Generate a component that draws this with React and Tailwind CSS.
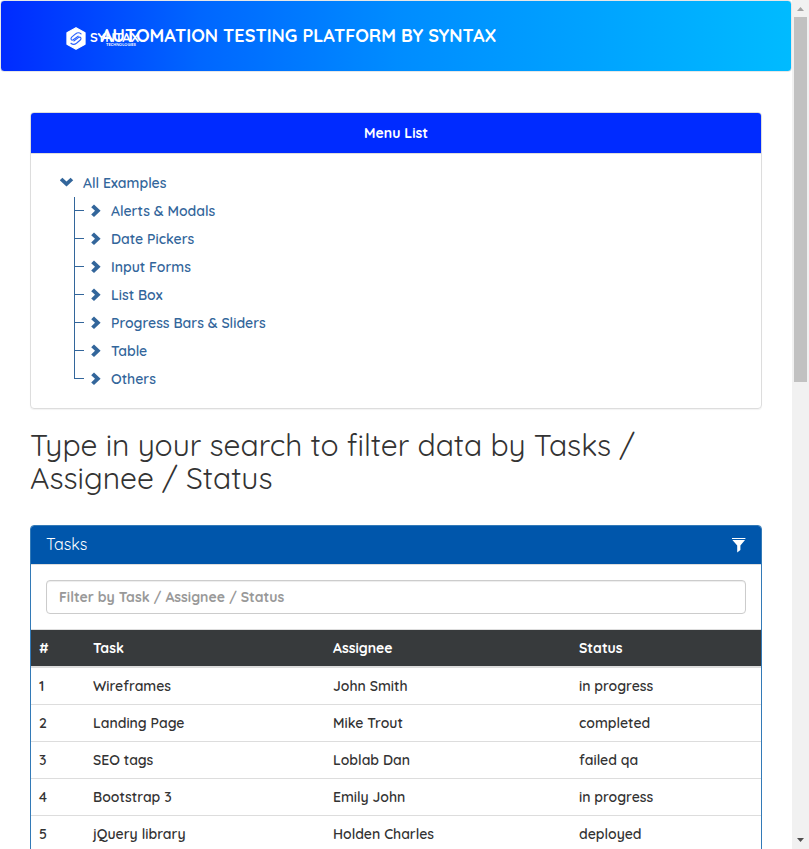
const MENU_ITEMS = [
  'Alerts & Modals',
  'Date Pickers',
  'Input Forms',
  'List Box',
  'Progress Bars & Sliders',
  'Table',
  'Others',
];

const TASKS = [
  { id: 1, task: 'Wireframes', assignee: 'John Smith', status: 'in progress' },
  { id: 2, task: 'Landing Page', assignee: 'Mike Trout', status: 'completed' },
  { id: 3, task: 'SEO tags', assignee: 'Loblab Dan', status: 'failed qa' },
  { id: 4, task: 'Bootstrap 3', assignee: 'Emily John', status: 'in progress' },
  { id: 5, task: 'jQuery library', assignee: 'Holden Charles', status: 'deployed' },
];

function ChevronDown() {
  return (
    <svg className="h-3.5 w-3.5 shrink-0" viewBox="0 0 14 14" fill="currentColor" aria-hidden="true">
      <path d="M-0.2 4.2 2.4 1.8 6.5 5.6 10.6 1.8 13.2 4.2 6.5 10.6Z" />
    </svg>
  );
}

function ChevronRight() {
  return (
    <svg className="h-3.5 w-3.5 shrink-0" viewBox="0 0 14 14" fill="currentColor" aria-hidden="true">
      <path d="M1.2 3.2 4 0.5 10.6 6.8 4 13.1 1.2 10.4 5 6.8Z" />
    </svg>
  );
}

function FilterIcon() {
  return (
    <svg className="h-4 w-3.5" viewBox="0 0 14 16" fill="currentColor" aria-hidden="true">
      <path d="M0 1H13.4V2H0Z" />
      <path d="M0.4 3H13L8.4 8.4V13L5.2 15.6V8.4Z" />
    </svg>
  );
}

function LogoMark() {
  return (
    <svg className="mt-1 h-[23px] w-5 shrink-0" viewBox="0 0 21 24" aria-hidden="true">
      <path
        d="M10.5 0.6 20 6V18L10.5 23.4 1 18V6Z"
        fill="#fff"
        stroke="#fff"
        strokeWidth="1.2"
        strokeLinejoin="round"
      />
      <g fill="none" stroke="#2b62ff" strokeWidth="1.2" strokeLinecap="round" strokeLinejoin="round">
        <path d="M15.8 7.2C14 5.6 11.8 5.8 10 7.2L6 10.6C4.4 12.4 5.6 14.2 7.6 13.4L12.8 9.6" />
        <path d="M5.2 17C7 18.6 9.2 18.4 11 17L15 13.6C16.6 11.8 15.4 10 13.4 10.8L8.2 14.6" />
      </g>
    </svg>
  );
}

function Navbar() {
  return (
    <nav className="mb-10 rounded border border-[#e7e7e7] bg-[linear-gradient(90deg,#002bff,#0066ff,#008cff,#00a3ff,#00bbff)] pl-[65px]">
      <a href="#home" className="relative flex h-[70px] items-center text-white">
        <LogoMark />
        <span className="absolute left-6 top-7 text-[13px] leading-4 font-bold">SYNTAX</span>
        <span className="absolute left-10 top-[41px] text-[4px] leading-[6px] font-bold">TECHNOLOGIES</span>
        <span className="ml-[15px] text-lg leading-5 font-bold">AUTOMATION TESTING PLATFORM BY SYNTAX</span>
      </a>
    </nav>
  );
}

function MenuPanel() {
  return (
    <section className="mb-5 rounded border border-[#ddd] shadow-[0_1px_1px_rgba(0,0,0,0.05)]">
      <h2 className="rounded-t-[3px] border-b border-[#ddd] bg-[#002bff] py-2.5 text-center leading-5 font-bold text-white">
        Menu List
      </h2>
      <div className="p-[15px] text-[#33669b]">
        <a href="#examples" className="ml-3.5 flex h-7 items-center gap-[9px]">
          <ChevronDown />
          All Examples
        </a>
        <ul className="ml-7">
          {MENU_ITEMS.map((item, i) => (
            <li key={item} className="flex h-7">
              <span className="flex w-2.5 flex-col">
                <span className="h-3.5 border-b border-l border-[#33669b]" />
                {i < MENU_ITEMS.length - 1 && <span className="flex-1 border-l border-[#33669b]" />}
              </span>
              <a href="#menu" className="ml-1.5 flex items-center gap-[7px]">
                <ChevronRight />
                {item}
              </a>
            </li>
          ))}
        </ul>
      </div>
    </section>
  );
}

function TasksPanel() {
  return (
    <section className="rounded border border-[#337ab7]">
      <header className="flex items-center justify-between rounded-t-[3px] border-b border-[#ddd] bg-[#0056ab] px-[15px] text-white">
        <h3 className="h-[38px] text-base leading-9 font-normal">Tasks</h3>
        <button type="button" aria-label="Toggle filter">
          <FilterIcon />
        </button>
      </header>
      <div className="p-[15px]">
        <input
          type="text"
          aria-label="Filter by Task / Assignee / Status"
          placeholder="Filter by Task / Assignee / Status"
          className="block h-[34px] w-full rounded border border-[#ccc] bg-white px-3 font-bold shadow-[inset_0_1px_1px_rgba(0,0,0,0.075)] placeholder:text-[#999]"
        />
      </div>
      <table className="w-full table-fixed border-separate border-spacing-0 text-left">
        <thead className="bg-[#373a3c] text-white">
          <tr>
            <th className="h-[39px] w-[54px] border-t border-b-2 border-[#ddd] px-2 font-bold">#</th>
            <th className="w-[240px] border-t border-b-2 border-[#ddd] px-2 font-bold">Task</th>
            <th className="w-[246px] border-t border-b-2 border-[#ddd] px-2 font-bold">Assignee</th>
            <th className="border-t border-b-2 border-[#ddd] px-2 font-bold">Status</th>
          </tr>
        </thead>
        <tbody>
          {TASKS.map((row) => (
            <tr key={row.id}>
              <td className="h-[37px] border-b border-[#ddd] px-2">{row.id}</td>
              <td className="border-b border-[#ddd] px-2">{row.task}</td>
              <td className="border-b border-[#ddd] px-2">{row.assignee}</td>
              <td className="border-b border-[#ddd] px-2">{row.status}</td>
            </tr>
          ))}
        </tbody>
      </table>
    </section>
  );
}

function Scrollbar() {
  return (
    <div className="flex w-[17px] shrink-0 flex-col items-center bg-[#f1f1f1]" aria-hidden="true">
      <svg className="h-[17px] w-[17px] shrink-0" viewBox="0 0 17 17" fill="#a3a3a3">
        <path d="M5 11 8.5 7 12 11Z" />
      </svg>
      <div className="h-[43%] w-[13px] bg-[#c1c1c1]" />
      <svg className="mt-auto h-[17px] w-[17px] shrink-0" viewBox="0 0 17 17" fill="#505050">
        <path d="M5 6 8.5 10 12 6Z" />
      </svg>
    </div>
  );
}

export default function App() {
  return (
    <div className="flex h-screen overflow-hidden bg-white font-['Quicksand','Inter',sans-serif] text-sm leading-5 font-semibold text-[#333]">
      <main className="min-w-0 flex-1">
        <Navbar />
        <div className="px-[30px]">
          <MenuPanel />
          <h1 className="mb-[30px] text-3xl leading-[33px] font-normal">
            Type in your search to filter data by Tasks / Assignee / Status
          </h1>
          <TasksPanel />
        </div>
      </main>
      <Scrollbar />
    </div>
  );
}
